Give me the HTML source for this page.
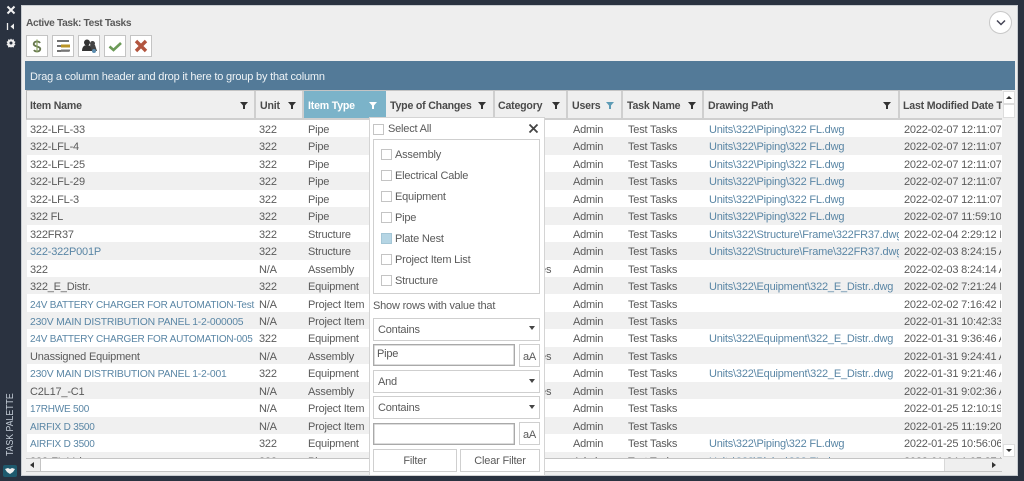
<!DOCTYPE html>
<html><head><meta charset="utf-8"><style>
*{box-sizing:border-box}
html,body{margin:0;padding:0}
body{width:1024px;height:481px;position:relative;overflow:hidden;background:#2a3240;font:11px "Liberation Sans",sans-serif;letter-spacing:-.2px;color:#5a5a5a}
.a{position:absolute;white-space:nowrap}
#panel{position:absolute;left:21px;top:5px;width:997px;height:471px;background:#eeeeee;border:1px solid #c8ccd0}
.tb{position:absolute;top:35px;width:22px;height:22px;background:#fff;border:1px solid #c4c4c4}
.tb svg{position:absolute;left:0;top:0}
#hdr{position:absolute;left:26px;top:90px;width:976px;height:30px;background:#efefef;border-top:1px solid #c4c4c4;border-bottom:2px solid #cfcfcf;border-left:1px solid #bbb}
.h{position:absolute;top:0;height:27px;line-height:31px;font-weight:bold;font-size:10.6px;color:#4a4a4a;border-right:2px solid #cfcfcf;padding-left:4px;overflow:hidden;white-space:nowrap}
.h svg{position:absolute;top:10px}
#grid{position:absolute;left:27px;top:120px;width:975px;height:338px;overflow:hidden;background:#fff}
.r{position:absolute;left:0;width:975px;height:17.45px;line-height:19px}
.r:nth-child(even){background:#f0f0f0}
.r span{position:absolute;top:1px;overflow:hidden;white-space:nowrap;height:17px}
.n{left:3px;width:226px}.u{left:232px;width:44px}.t{left:281px;width:80px}.c{left:470px;width:72px}.s{left:546px;width:50px}.k{left:601px;width:76px}.p{left:682px;width:190px;color:#5a86a5}.d{left:877px;width:97px}
.l{color:#5a86a5;font-size:10px}
.m{color:#5a86a5;font-size:10.4px}
#pop{position:absolute;left:369px;top:117px;width:176px;height:359px;background:#fff;border:1px solid #d4d4d4}
.cb{position:absolute;width:11px;height:11px;background:#fff;border:1px solid #c4c4c4}
.b{position:absolute;background:#fff;border:1px solid #cfcfcf;line-height:23px;padding-left:4px;color:#5a5a5a}
.i{position:absolute;background:#fff;border:1px solid #a9a9a9;box-shadow:inset 0 0 0 .5px #bbb;line-height:18px;padding-left:3px;color:#555}
.tri{position:absolute;width:0;height:0;border-left:3px solid transparent;border-right:3px solid transparent;border-top:4px solid #444}
.btn{position:absolute;background:#fff;border:1px solid #cfcfcf;text-align:center;color:#5a5a5a}
.o{line-height:15px}
</style></head><body>
<div id="panel"></div>

<svg class="a" style="left:5px;top:4px" width="12" height="44" viewBox="0 0 12 44">
<path d="M2.5 2.5L9.5 9.5M9.5 2.5L2.5 9.5" stroke="#f2f2f2" stroke-width="2"/>
<path d="M2.500 19v7" stroke="#eee" stroke-width="1.3"/><path d="M9 19.500v6l-3.500-3z" fill="#eee"/>
<path d="M6 34.500l1 1.300 1.800-.5.200 1.700 1.500.9-1 1.500 1 1.500-1.500.9-.2 1.700-1.800-.5-1 .5-1-.5-1.800.5-.2-1.700-1.500-.9 1-1.500-1-1.500 1.500-.9.2-1.700 1.800.5z" fill="#eee"/><circle cx="6" cy="39" r="1.500" fill="#2a3240"/>
</svg>
<div class="a" style="left:4px;top:456px;color:#c3ccd6;font-size:10.500px;letter-spacing:0;line-height:13px;transform-origin:0 0;transform:rotate(-90deg) scaleX(.83)">TASK PALETTE</div>
<div class="a" style="left:3px;top:465px;width:14px;height:12px;background:#1e5a6e;border-radius:2px"></div>
<svg class="a" style="left:5px;top:467px" width="10" height="8"><path d="M0 2l3-1 2 1 2-1 3 1-2 3-3 2-3-2z" fill="#f0f0f0"/></svg>

<div class="a" style="left:26px;top:17px;font-weight:bold;color:#5a5a5a;line-height:14px;font-size:10.200px;letter-spacing:-.35px">Active Task: Test Tasks</div>
<div class="a" style="left:989px;top:11px;width:23px;height:23px;border-radius:50%;background:#fff;border:1px solid #c8c8c8"></div>
<svg class="a" style="left:995px;top:19px" width="12" height="8"><path d="M2 1.500l4 4 4-4" fill="none" stroke="#445" stroke-width="1.500"/></svg>

<div class="tb" style="left:26px"><svg width="20" height="20"><path d="M13 7c-1-2-5-2-6 0s1 3 3 3.500 4 1.500 3 3.500-5 2-6 0" fill="none" stroke="#66764e" stroke-width="1.800"/><path d="M10 3.500v13" stroke="#8ba662" stroke-width="1.200"/></svg></div>
<div class="tb" style="left:52px"><svg width="20" height="20"><path d="M4 5h12M4 10h12M4 15h12" stroke="#444" stroke-width="1.600"/><path d="M8 8.500h9v3H8z" fill="#b99326"/><path d="M8 13.500h9v2H8z" fill="#777"/></svg></div>
<div class="tb" style="left:78px"><svg width="20" height="20"><circle cx="8" cy="6.500" r="3" fill="#333"/><path d="M3 15c0-4 2-6 5-6s5 2 5 6z" fill="#333"/><circle cx="13.500" cy="7.500" r="2.500" fill="#444"/><path d="M11 9h5l2 6h-5z" fill="#444"/><circle cx="15" cy="15" r="2" fill="#5c8eb0"/></svg></div>
<div class="tb" style="left:104px"><svg width="20" height="20"><path d="M4.500 10.500l4 3.500 7.500-7" fill="none" stroke="#6c9a58" stroke-width="2.600"/></svg></div>
<div class="tb" style="left:130px"><svg width="20" height="20"><path d="M5 5l10 10M15 5L5 15" stroke="#b2553f" stroke-width="3.400"/></svg></div>

<div class="a" style="left:25px;top:61px;width:990px;height:29px;background:#537a98;color:#eef3f6;line-height:32px;padding-left:5px">Drag a column header and drop it here to group by that column</div>

<div id="hdr">
<div class="h" style="left:0;width:229px;padding-left:3px">Item Name<svg style="left:213px" width="9" height="9"><path d="M0 1h8L5 4.500V8H3V4.500z" fill="#333"/></svg></div>
<div class="h" style="left:229px;width:48px">Unit<svg style="left:32px" width="9" height="9"><path d="M0 1h8L5 4.500V8H3V4.500z" fill="#333"/></svg></div>
<div class="h" style="left:277px;width:82px;background:#7bb3c9;color:#fff;border-right:0">Item Type<svg style="left:65px" width="9" height="9"><path d="M0 1h8L5 4.500V8H3V4.500z" fill="#fff"/></svg></div>
<div class="h" style="left:359px;width:109px">Type of Changes<svg style="left:92px" width="9" height="9"><path d="M0 1h8L5 4.500V8H3V4.500z" fill="#333"/></svg></div>
<div class="h" style="left:468px;width:73px;padding-left:3px">Category<svg style="left:57px" width="9" height="9"><path d="M0 1h8L5 4.500V8H3V4.500z" fill="#333"/></svg></div>
<div class="h" style="left:541px;width:55px">Users<svg style="left:38px" width="9" height="9"><path d="M0 1h8L5 4.500V8H3V4.500z" fill="#5d9bb5"/></svg></div>
<div class="h" style="left:596px;width:81px">Task Name<svg style="left:65px" width="9" height="9"><path d="M0 1h8L5 4.500V8H3V4.500z" fill="#333"/></svg></div>
<div class="h" style="left:677px;width:196px">Drawing Path<svg style="left:179px" width="9" height="9"><path d="M0 1h8L5 4.500V8H3V4.500z" fill="#333"/></svg></div>
<div class="h" style="left:873px;width:102px;border-right:0;padding-left:3px">Last Modified Date Time</div>
</div>

<div id="grid">
<div class="r" style="top:0"><span class="n">322-LFL-33</span><span class="u">322</span><span class="t">Pipe</span><span class="s">Admin</span><span class="k">Test Tasks</span><span class="p">Units\322\Piping\322 FL.dwg</span><span class="d">2022-02-07 12:11:07 PM</span></div>
<div class="r" style="top:17.45px"><span class="n">322-LFL-4</span><span class="u">322</span><span class="t">Pipe</span><span class="s">Admin</span><span class="k">Test Tasks</span><span class="p">Units\322\Piping\322 FL.dwg</span><span class="d">2022-02-07 12:11:07 PM</span></div>
<div class="r" style="top:34.9px"><span class="n">322-LFL-25</span><span class="u">322</span><span class="t">Pipe</span><span class="s">Admin</span><span class="k">Test Tasks</span><span class="p">Units\322\Piping\322 FL.dwg</span><span class="d">2022-02-07 12:11:07 PM</span></div>
<div class="r" style="top:52.35px"><span class="n">322-LFL-29</span><span class="u">322</span><span class="t">Pipe</span><span class="s">Admin</span><span class="k">Test Tasks</span><span class="p">Units\322\Piping\322 FL.dwg</span><span class="d">2022-02-07 12:11:07 PM</span></div>
<div class="r" style="top:69.8px"><span class="n">322-LFL-3</span><span class="u">322</span><span class="t">Pipe</span><span class="s">Admin</span><span class="k">Test Tasks</span><span class="p">Units\322\Piping\322 FL.dwg</span><span class="d">2022-02-07 12:11:07 PM</span></div>
<div class="r" style="top:87.25px"><span class="n">322 FL</span><span class="u">322</span><span class="t">Pipe</span><span class="s">Admin</span><span class="k">Test Tasks</span><span class="p">Units\322\Piping\322 FL.dwg</span><span class="d">2022-02-07 11:59:10 AM</span></div>
<div class="r" style="top:104.7px"><span class="n">322FR37</span><span class="u">322</span><span class="t">Structure</span><span class="s">Admin</span><span class="k">Test Tasks</span><span class="p">Units\322\Structure\Frame\322FR37.dwg</span><span class="d">2022-02-04 2:29:12 PM</span></div>
<div class="r" style="top:122.15px"><span class="n" style="color:#5a86a5">322-322P001P</span><span class="u">322</span><span class="t">Structure</span><span class="s">Admin</span><span class="k">Test Tasks</span><span class="p">Units\322\Structure\Frame\322FR37.dwg</span><span class="d">2022-02-03 8:24:15 AM</span></div>
<div class="r" style="top:139.6px"><span class="n">322</span><span class="u">N/A</span><span class="t">Assembly</span><span class="c">Assemblies</span><span class="s">Admin</span><span class="k">Test Tasks</span><span class="d">2022-02-03 8:24:14 AM</span></div>
<div class="r" style="top:157.05px"><span class="n">322_E_Distr.</span><span class="u">322</span><span class="t">Equipment</span><span class="s">Admin</span><span class="k">Test Tasks</span><span class="p">Units\322\Equipment\322_E_Distr..dwg</span><span class="d">2022-02-02 7:21:24 PM</span></div>
<div class="r" style="top:174.5px"><span class="n l">24V BATTERY CHARGER FOR AUTOMATION-Test</span><span class="u">N/A</span><span class="t">Project Item</span><span class="s">Admin</span><span class="k">Test Tasks</span><span class="d">2022-02-02 7:16:42 PM</span></div>
<div class="r" style="top:191.95px"><span class="n m">230V MAIN DISTRIBUTION PANEL 1-2-000005</span><span class="u">N/A</span><span class="t">Project Item</span><span class="s">Admin</span><span class="k">Test Tasks</span><span class="d">2022-01-31 10:42:33 AM</span></div>
<div class="r" style="top:209.4px"><span class="n l">24V BATTERY CHARGER FOR AUTOMATION-005</span><span class="u">322</span><span class="t">Equipment</span><span class="s">Admin</span><span class="k">Test Tasks</span><span class="p">Units\322\Equipment\322_E_Distr..dwg</span><span class="d">2022-01-31 9:36:46 AM</span></div>
<div class="r" style="top:226.85px"><span class="n">Unassigned Equipment</span><span class="u">N/A</span><span class="t">Assembly</span><span class="c">Assemblies</span><span class="s">Admin</span><span class="k">Test Tasks</span><span class="d">2022-01-31 9:24:41 AM</span></div>
<div class="r" style="top:244.3px"><span class="n m">230V MAIN DISTRIBUTION PANEL 1-2-001</span><span class="u">322</span><span class="t">Equipment</span><span class="s">Admin</span><span class="k">Test Tasks</span><span class="p">Units\322\Equipment\322_E_Distr..dwg</span><span class="d">2022-01-31 9:21:46 AM</span></div>
<div class="r" style="top:261.75px"><span class="n">C2L17_-C1</span><span class="u">N/A</span><span class="t">Assembly</span><span class="c">Assemblies</span><span class="s">Admin</span><span class="k">Test Tasks</span><span class="d">2022-01-31 9:02:36 AM</span></div>
<div class="r" style="top:279.2px"><span class="n l">17RHWE 500</span><span class="u">N/A</span><span class="t">Project Item</span><span class="s">Admin</span><span class="k">Test Tasks</span><span class="d">2022-01-25 12:10:19 PM</span></div>
<div class="r" style="top:296.65px"><span class="n l">AIRFIX D 3500</span><span class="u">N/A</span><span class="t">Project Item</span><span class="s">Admin</span><span class="k">Test Tasks</span><span class="d">2022-01-25 11:19:20 AM</span></div>
<div class="r" style="top:314.1px"><span class="n l">AIRFIX D 3500</span><span class="u">322</span><span class="t">Equipment</span><span class="s">Admin</span><span class="k">Test Tasks</span><span class="p">Units\322\Piping\322 FL.dwg</span><span class="d">2022-01-25 10:56:06 AM</span></div>
<div class="r" style="top:331.55px"><span class="n">322-FL-Valve</span><span class="u">322</span><span class="t">Pipe</span><span class="s">Admin</span><span class="k">Test Tasks</span><span class="p">Units\322\Piping\322 FL.dwg</span><span class="d">2022-01-24 1:05:37 PM</span></div>
</div>

<div class="a" style="left:1002px;top:90px;width:13px;height:381px;background:#efefef"></div>
<div class="a" style="left:1003px;top:91px;width:12px;height:13px;background:#fff;border:1px solid #ddd"></div>
<div class="a" style="left:1003px;top:104px;width:12px;height:14px;background:#fff;border:1px solid #ddd"></div>
<div class="a" style="left:1003px;top:444px;width:12px;height:13px;background:#fff;border:1px solid #ddd"></div>
<div class="tri" style="left:1006px;top:96px;border-top:0;border-bottom:3px solid #333"></div>
<div class="tri" style="left:1006px;top:449px;border-top:3px solid #333"></div>
<div class="a" style="left:26px;top:458px;width:976px;height:14px;background:#efefef;border-top:1px solid #c4c4c4;border-bottom:1px solid #c4c4c4"></div>
<div class="a" style="left:40px;top:459px;width:905px;height:12px;background:#fff;border-left:1px solid #c4c4c4;border-right:1px solid #d8d8d8"></div>
<div class="tri" style="left:30px;top:462px;border:0;border-top:3px solid transparent;border-bottom:3px solid transparent;border-right:4px solid #333"></div>
<div class="tri" style="left:992px;top:462px;border:0;border-top:3px solid transparent;border-bottom:3px solid transparent;border-left:4px solid #333"></div>

<div id="pop"></div>
<div class="cb" style="left:373px;top:124px"></div>
<div class="a o" style="left:388px;top:122px">Select All</div>
<svg class="a" style="left:528px;top:123px" width="11" height="11"><path d="M1.500 1.500l8 8M9.500 1.500l-8 8" stroke="#444" stroke-width="1.800"/></svg>
<div class="a" style="left:373px;top:139px;width:167px;height:155px;background:#fff;border:1px solid #cfcfcf"></div>
<div class="cb" style="left:381px;top:149px"></div><div class="a o" style="left:395px;top:148px">Assembly</div>
<div class="cb" style="left:381px;top:170px"></div><div class="a o" style="left:395px;top:169px">Electrical Cable</div>
<div class="cb" style="left:381px;top:191px"></div><div class="a o" style="left:395px;top:190px">Equipment</div>
<div class="cb" style="left:381px;top:212px"></div><div class="a o" style="left:395px;top:211px">Pipe</div>
<div class="cb" style="left:381px;top:233px;background:#b5d5e4;border-color:#a4c6d6"></div><div class="a o" style="left:395px;top:232px">Plate Nest</div>
<div class="cb" style="left:381px;top:254px"></div><div class="a o" style="left:395px;top:253px">Project Item List</div>
<div class="cb" style="left:381px;top:275px"></div><div class="a o" style="left:395px;top:274px">Structure</div>
<div class="a o" style="left:373px;top:299px">Show rows with value that</div>
<div class="b" style="left:373px;top:318px;width:167px;height:23px">Contains</div><div class="tri" style="left:529px;top:326px"></div>
<div class="i" style="left:373px;top:344px;width:142px;height:22px">Pipe</div>
<div class="btn" style="left:519px;top:344px;width:21px;height:23px;line-height:24px">aA</div>
<div class="b" style="left:373px;top:370px;width:167px;height:23px">And</div><div class="tri" style="left:529px;top:379px"></div>
<div class="b" style="left:373px;top:396px;width:167px;height:23px">Contains</div><div class="tri" style="left:529px;top:405px"></div>
<div class="i" style="left:373px;top:423px;width:142px;height:22px"></div>
<div class="btn" style="left:519px;top:422px;width:21px;height:23px;line-height:24px">aA</div>
<div class="btn" style="left:373px;top:449px;width:84px;height:23px;line-height:23px">Filter</div>
<div class="btn" style="left:460px;top:449px;width:80px;height:23px;line-height:23px">Clear Filter</div>
</body></html>
